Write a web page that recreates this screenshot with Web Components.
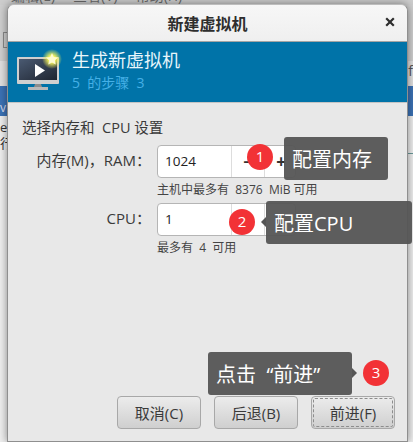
<!DOCTYPE html>
<html lang="zh">
<head>
<meta charset="utf-8">
<title>新建虚拟机</title>
<style>
    html, body { margin: 0; height: 100%; }
    body {
        width: 413px;
        height: 442px;
        overflow: hidden;
        position: relative;
        font-family: "Open Sans", "Noto Sans CJK SC", sans-serif;
    }
</style>
</head>
<body>
<app-backdrop></app-backdrop>
<vm-dialog heading="新建虚拟机">
    <vm-banner slot="banner" title="生成新虚拟机" step="5&nbsp; 的步骤&nbsp; 3"></vm-banner>
    <vm-section title="选择内存和&nbsp; CPU 设置"></vm-section>
    <vm-row label="内存(M)，RAM：" value="1024" hint="主机中最多有&nbsp; 8376&nbsp; MiB 可用"></vm-row>
    <vm-row label="CPU：" value="1" hint="最多有&nbsp; 4&nbsp; 可用"></vm-row>
    <vm-button slot="actions">取消(C)</vm-button>
    <vm-button slot="actions">后退(B)</vm-button>
    <vm-button slot="actions" focused>前进(F)</vm-button>
</vm-dialog>
<tip-callout text="配置内存" num="1" style="left:284px;top:137px;width:104px" badge="-37" badgetop="7"></tip-callout>
<tip-callout text="配置CPU" num="2" style="left:266px;top:201px;width:146px" badge="-37" arrow="left"></tip-callout>
<tip-callout text="点击&nbsp; “前进”" num="3" style="left:208px;top:352px;width:144px" badge="155" arrow="right"></tip-callout>

<script>
class AppBackdrop extends HTMLElement {
    connectedCallback() {
        this.attachShadow({ mode: 'open' });
        this.shadowRoot.innerHTML = `
            <style>
                :host {
                    display: flex;
                    flex-direction: column;
                    height: 442px;
                    background: #e2e2e2;
                    color: #444;
                    font-size: 14px;
                    overflow: hidden;
                }
                .menu {
                    height: 5px;
                    overflow: hidden;
                    display: flex;
                    gap: 18px;
                    padding-left: 11px;
                    background: #cdcdcd;
                    color: #6a6a6a;
                }
                .menu span { margin-top: -14px; line-height: 20px; white-space: nowrap; }
                .tools { height: 56px; background: #cfcfcf; }
                .tools i {
                    display: block;
                    width: 6px;
                    height: 14px;
                    margin-top: 27px;
                    margin-left: 3px;
                    border: 1px solid #8a8a8a;
                }
                .head {
                    height: 25px;
                    background: #e0e0e0;
                    text-align: right;
                    padding-right: 0;
                    line-height: 20px;
                    color: #555;
                }
                .sel { height: 30px; background: #3b72b5; color: #dde; line-height: 44px; font-size: 12px; }
                .rows { flex: 1; background: #efefef; line-height: 16px; padding-top: 3px; position: relative; }
                .clip { width: 7px; overflow: hidden; white-space: nowrap; color: #333; font-size: 13px; }
                .line { margin-top: 2px; margin-left: 408px; height: 1px; background: #6a9a9a; }
            </style>
            <div class="menu"><span>编辑(E)</span><span>查看(V)</span><span>帮助(H)</span></div>
            <div class="tools"><i></i></div>
            <div class="head">f</div>
            <div class="sel">v</div>
            <div class="rows">
                <div class="clip">er</div>
                <div class="clip">行</div>
                <div class="line"></div>
            </div>
        `;
    }
}

class VmDialog extends HTMLElement {
    connectedCallback() {
        this.attachShadow({ mode: 'open' });
        this.shadowRoot.innerHTML = `
            <style>
                :host {
                    position: absolute;
                    left: 7px;
                    top: 4px;
                    width: 399px;
                    height: 436px;
                    display: flex;
                    flex-direction: column;
                    background: #e8e8e8;
                    border: 1px solid #8f8f8f;
                    border-top-color: #bdbdbd;
                    border-radius: 7px 7px 0 0;
                    box-shadow: 0 0 9px rgba(0, 0, 0, 0.45);
                    color: #3a3a3a;
                }
                .title {
                    height: 36px;
                    flex: none;
                    display: flex;
                    align-items: center;
                    justify-content: center;
                    position: relative;
                    background: linear-gradient(#f7f7f7, #efefef);
                    border-bottom: 1px solid #a4a4a4;
                    border-radius: 6px 6px 0 0;
                    font-size: 16px;
                    font-weight: 700;
                    color: #2e2e2e;
                }
                .close {
                    position: absolute;
                    right: 12px;
                    top: 12px;
                    width: 10px;
                    height: 10px;
                }
                .body {
                    flex: 1;
                    display: flex;
                    flex-direction: column;
                    padding: 16px 13px 0 14px;
                }
                .actions {
                    display: flex;
                    justify-content: flex-end;
                    gap: 13px;
                    padding: 0 12px 12px 0;
                }
            </style>
            <div class="title">
                <span>${this.getAttribute('heading')}</span>
                <svg class="close" viewBox="0 0 10 10"><path d="M1.2 1.2 8.8 8.8M8.8 1.2 1.2 8.8" stroke="#2e2e2e" stroke-width="2.2"/></svg>
            </div>
            <slot name="banner"></slot>
            <div class="body"><slot></slot></div>
            <div class="actions"><slot name="actions"></slot></div>
        `;
    }
}

class VmBanner extends HTMLElement {
    connectedCallback() {
        this.attachShadow({ mode: 'open' });
        this.shadowRoot.innerHTML = `
            <style>
                :host {
                    display: flex;
                    align-items: flex-start;
                    flex: none;
                    height: 61px;
                    background: #0073a8;
                    border-bottom: 1px solid #c4c4c4;
                    box-sizing: border-box;
                }
                svg { width: 48px; height: 44px; margin: 7px 0 0 7px; flex: none; }
                .text { margin: 5px 0 0 9px; display: flex; flex-direction: column; }
                .title { font-size: 18px; line-height: 26px; color: #e8f6fb; }
                .step { font-size: 14px; line-height: 20px; color: #45b0e6; }
            </style>
            <svg viewBox="0 0 48 44">
                <defs>
                    <linearGradient id="scr" x1="0" y1="0" x2="1" y2="1">
                        <stop offset="0" stop-color="#4a5a72"/>
                        <stop offset="1" stop-color="#1f2530"/>
                    </linearGradient>
                    <radialGradient id="glow">
                        <stop offset="0.35" stop-color="#f4f25a"/>
                        <stop offset="1" stop-color="#f4f25a" stop-opacity="0"/>
                    </radialGradient>
                </defs>
                <rect x="2" y="8" width="42" height="27" rx="1" fill="#cfcfcf"/>
                <rect x="4" y="10" width="38" height="21" fill="url(#scr)"/>
                <path d="M20 35h6l1 3h-8z" fill="#8d8d8d"/>
                <rect x="13" y="38" width="20" height="3" fill="#b9b9b9"/>
                <path d="M20 15 30 21.500 20 28z" fill="#fff"/>
                <circle cx="37" cy="10" r="10" fill="url(#glow)"/>
                <path d="M37 4l1.800 3.900 4.200.5-3.100 2.900.8 4.200-3.700-2.100-3.700 2.100.8-4.200-3.100-2.900 4.200-.5z" fill="#fffbd0"/>
            </svg>
            <div class="text">
                <span class="title">${this.getAttribute('title')}</span>
                <span class="step">${this.getAttribute('step')}</span>
            </div>
        `;
    }
}

class VmSection extends HTMLElement {
    connectedCallback() {
        this.attachShadow({ mode: 'open' });
        this.shadowRoot.innerHTML = `
            <style>
                :host { display: block; font-size: 14.500px; line-height: 18px; margin-bottom: 8px; white-space: nowrap; }
            </style>
            <span>${this.getAttribute('title')}</span>
        `;
    }
}

class VmRow extends HTMLElement {
    connectedCallback() {
        this.attachShadow({ mode: 'open' });
        this.shadowRoot.innerHTML = `
            <style>
                :host {
                    display: grid;
                    grid-template-columns: 135px 139px;
                }
                .label { font-size: 15px; text-align: right; padding-right: 6px; line-height: 31px; white-space: nowrap; }
                .hint { grid-column: 2; font-size: 12px; line-height: 23px; height: 25px; white-space: nowrap; color: #444; }
                vm-spinner { height: 33px; }
            </style>
            <span class="label">${this.getAttribute('label')}</span>
            <vm-spinner value="${this.getAttribute('value')}"></vm-spinner>
            <span class="hint">${this.getAttribute('hint')}</span>
        `;
    }
}

class VmSpinner extends HTMLElement {
    connectedCallback() {
        this.attachShadow({ mode: 'open' });
        this.shadowRoot.innerHTML = `
            <style>
                :host {
                    display: grid;
                    grid-template-columns: 73px 33px 33px;
                    box-sizing: border-box;
                    background: #fff;
                    border: 1px solid #b5b5b5;
                    border-radius: 4px;
                    font-size: 13.500px;
                    color: #222;
                    line-height: 31px;
                }
                span { text-align: center; font-size: 17px; font-weight: 700; border-left: 1px solid #ddd; color: #333; }
                .val { padding-left: 7px; }
            </style>
            <div class="val">${this.getAttribute('value')}</div>
            <span>−</span>
            <span>+</span>
        `;
    }
}

class VmButton extends HTMLElement {
    connectedCallback() {
        this.attachShadow({ mode: 'open' });
        const focused = this.hasAttribute('focused');
        this.shadowRoot.innerHTML = `
            <style>
                :host {
                    display: flex;
                    align-items: center;
                    justify-content: center;
                    width: 84px;
                    height: 33px;
                    box-sizing: border-box;
                    border: 1px solid #a8a8a8;
                    border-radius: 4px;
                    background: linear-gradient(#ececec, #cfcfcf);
                    font-size: 15px;
                    color: #3a3a3a;
                    ${focused ? 'outline: 1px dashed #8d8d8d; outline-offset: -3px;' : ''}
                }
            </style>
            <slot></slot>
        `;
    }
}

class TipCallout extends HTMLElement {
    connectedCallback() {
        this.attachShadow({ mode: 'open' });
        const arrow = this.getAttribute('arrow');
        this.shadowRoot.innerHTML = `
            <style>
                :host {
                    position: absolute;
                    height: 43px;
                    box-sizing: border-box;
                    padding-left: 8px;
                    display: flex;
                    align-items: center;
                    background: rgba(85, 85, 85, 0.95);
                    border-radius: 3px;
                    color: #fff;
                    font-size: 20px;
                    white-space: nowrap;
                }
                .num {
                    position: absolute;
                    left: ${this.getAttribute('badge')}px;
                    top: ${this.getAttribute('badgetop') || 8}px;
                    width: 26px;
                    height: 26px;
                    border-radius: 50%;
                    background: #f23236;
                    font-size: 15px;
                    font-weight: 400;
                    line-height: 24px;
                    text-align: center;
                }
                .arrow {
                    position: absolute;
                    top: 16px;
                    width: 0;
                    height: 0;
                    border: 5px solid transparent;
                    ${arrow === 'left' ? 'left: -10px; border-right-color: #555;' : ''}
                    ${arrow === 'right' ? 'right: -10px; border-left-color: #555;' : ''}
                    ${arrow ? '' : 'display: none;'}
                }
            </style>
            <span>${this.getAttribute('text')}</span>
            <i class="arrow"></i>
            <b class="num">${this.getAttribute('num')}</b>
        `;
    }
}

customElements.define('app-backdrop', AppBackdrop);
customElements.define('vm-dialog', VmDialog);
customElements.define('vm-banner', VmBanner);
customElements.define('vm-section', VmSection);
customElements.define('vm-row', VmRow);
customElements.define('vm-spinner', VmSpinner);
customElements.define('vm-button', VmButton);
customElements.define('tip-callout', TipCallout);
</script>
</body>
</html>
